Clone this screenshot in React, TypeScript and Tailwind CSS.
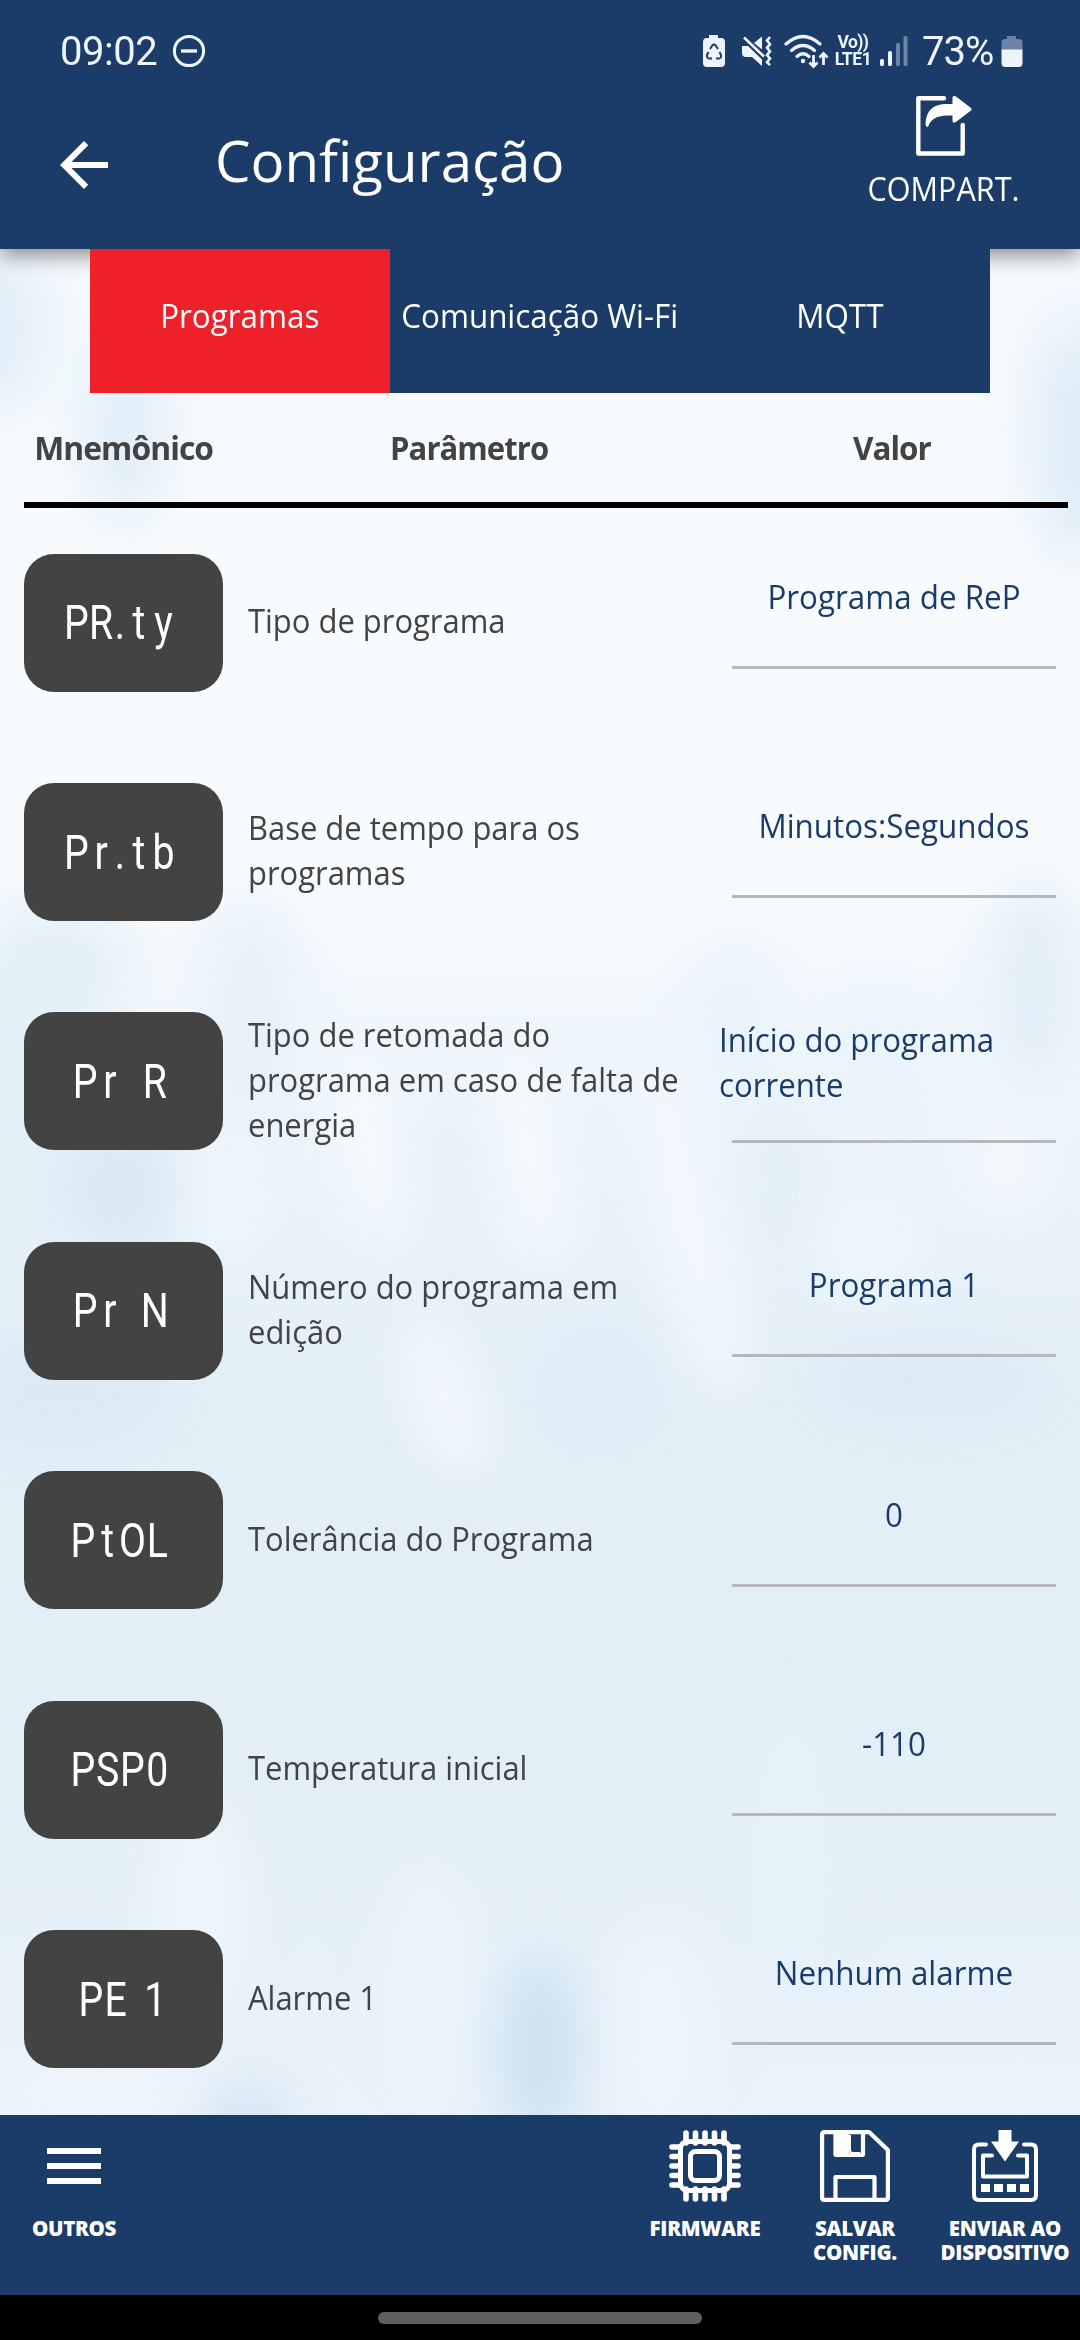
import type { ReactNode } from "react"
import clsx from "clsx"

const tabs = [
  { label: "Programas", active: true },
  { label: "Comunicação Wi-Fi", active: false },
  { label: "MQTT", active: false },
]

const parameters = [
  { code: "PR.ty", name: "Tipo de programa", value: "Programa de ReP" },
  { code: "Pr.tb", name: "Base de tempo para os\nprogramas", value: "Minutos:Segundos" },
  {
    code: "Pr R",
    name: "Tipo de retomada do\nprograma em caso de falta de\nenergia",
    value: "Início do programa\ncorrente",
  },
  { code: "Pr N", name: "Número do programa em\nedição", value: "Programa 1" },
  { code: "PtOL", name: "Tolerância do Programa", value: "0" },
  { code: "PSP0", name: "Temperatura inicial", value: "-110" },
  { code: "PE 1", name: "Alarme 1", value: "Nenhum alarme" },
]

function StatusBar() {
  return (
    <div className="flex h-[102px] items-center pl-[60px] pr-[57px] font-['Roboto',sans-serif] text-[#eef4fd]">
      <span className="w-[112px] pt-[2px] text-[40px] leading-none tracking-[-0.5px]">09:02</span>
      <svg width="34" height="34" viewBox="0 0 34 34" fill="none" stroke="currentColor" strokeWidth="3">
        <circle cx="17" cy="17" r="14.6" />
        <path d="M9 17h16" strokeWidth="3.4" />
      </svg>

      {/* Battery protection */}
      <svg className="ml-auto" width="24" height="34" viewBox="0 0 24 34">
        <path d="M7 1h9v3h3a4 4 0 0 1 4 4v21a4 4 0 0 1-4 4H5a4 4 0 0 1-4-4V8a4 4 0 0 1 4-4h2z" fill="currentColor" />
        <g fill="none" stroke="#1b3b69" strokeWidth="2" strokeLinejoin="round">
          <path d="M8 15l2.300-3.500q1.700-2 3.400 0L16 15" />
          <path d="M17.500 18l1.500 3q.6 3-2 3.500h-3" />
          <path d="M6.500 18L5 21q-.6 3 2 3.500h3" />
        </g>
      </svg>

      {/* Muted */}
      <svg className="ml-[15px]" width="32" height="34" viewBox="0 0 32 34">
        <path d="M1 12h6L21 25.500V32L11 23H5a4 4 0 0 1-4-4z" fill="currentColor" />
        <path d="M13 9l8-6.500v13z" fill="currentColor" />
        <path d="M3 3.500l20 19" stroke="currentColor" strokeWidth="2.600" />
        <path d="M29 3l-3 3.600 3 3.600-3 3.600 3 3.600-3 3.600 3 3.600-3 3.600 3 3" fill="none" stroke="currentColor" strokeWidth="2.600" />
      </svg>

      {/* Wi-Fi */}
      <svg className="ml-[11px]" width="45" height="36" viewBox="0 0 45 36" fill="none" stroke="currentColor">
        <path d="M2 11q17-15 34 0M7.500 17.500q11.500-10 23 0M13 23.500q6-5.500 12 0" strokeWidth="3.200" strokeLinecap="round" />
        <circle cx="19" cy="28" r="2.200" fill="currentColor" stroke="none" />
        <path d="M29.500 22v11M25.500 29.500l4 4 4-4M39.500 32V20.500M35.500 24.500l4-4 4 4" strokeWidth="2.800" />
      </svg>

      <div className="ml-[4px] flex w-[40px] flex-col items-center text-[17.5px] font-bold leading-[17px]">
        <span className="tracking-[-0.6px]">Vo))</span>
        <span className="tracking-[-0.4px]">LTE1</span>
      </div>

      {/* Signal */}
      <svg className="ml-[7px]" width="28" height="32" viewBox="0 0 28 32">
        <rect x="0" y="24" width="4" height="7" rx="1.500" fill="currentColor" />
        <rect x="8" y="16" width="4" height="15" rx="1.500" fill="currentColor" />
        <rect x="16" y="8" width="4" height="23" rx="1.500" fill="#6d83a5" />
        <rect x="23.500" y="1" width="4" height="30" rx="1.500" fill="#6d83a5" />
      </svg>

      <span className="ml-[14px] w-[76px] pt-[2px] text-[40px] leading-none tracking-[-1px]">73%</span>
      <svg className="ml-[3px]" width="22" height="33" viewBox="0 0 22 33">
        <path d="M6 1h9v3h3a3.500 3.500 0 0 1 3.500 3.500V15H.5V7.500A3.500 3.500 0 0 1 4 4h2z" fill="#6d83a5" />
        <path d="M.5 14.500h21V28a4 4 0 0 1-4 4h-13a4 4 0 0 1-4-4z" fill="currentColor" />
      </svg>
    </div>
  )
}

function Header() {
  return (
    <header className="relative z-10 h-[249px] bg-[#1b3b69] text-white shadow-[0_6px_20px_rgba(0,0,0,0.45)]">
      <StatusBar />
      <div className="-mt-[10px] flex h-[147px] items-start pl-[60px] pr-[54px]">
        <svg className="mt-[49px]" width="48" height="48" viewBox="4 4 16 16" fill="currentColor">
          <path d="M20 11H7.830l5.590-5.590L12 4l-8 8 8 8 1.410-1.410L7.830 13H20v-2z" />
        </svg>
        <h1 className="ml-[107px] mt-[28px] origin-left scale-x-[0.99] whitespace-nowrap text-[57px] leading-[80px]">
          Configuração
        </h1>
        <div className="ml-auto flex w-[164px] flex-col items-center pt-[4px]">
          <svg width="56" height="60" viewBox="0 0 56 60">
            <path d="M28 2.300H2.300v55.200h44.400V29" fill="none" stroke="#fff" strokeWidth="4.400" strokeLinecap="round" strokeLinejoin="round" />
            <path d="M38 0q-1.500.2-1.500 2v6H31Q10 8 9.500 28q.2 3 2.500 3Q15 20 31 19.500h5.500V25q.5 2.500 3 1.200L55 14.500q1-1.300 0-2.500L40 .5q-1-.6-2-.5z" fill="#fff" />
          </svg>
          <span className="mt-[11px] scale-x-[0.955] text-[32px] leading-[44px]">COMPART.</span>
        </div>
      </div>
    </header>
  )
}

function Backdrop() {
  return (
    <svg className="absolute inset-0 h-full w-full" viewBox="0 249 1080 1866" preserveAspectRatio="none">
      <defs>
        <linearGradient id="sky" x1="0" y1="0" x2="0" y2="1">
          <stop offset="0" stopColor="#f4f9fd" />
          <stop offset="0.12" stopColor="#f7fbfe" />
          <stop offset="0.34" stopColor="#f7fbfe" />
          <stop offset="0.48" stopColor="#ebf4fb" />
          <stop offset="0.62" stopColor="#e2eff7" />
          <stop offset="0.8" stopColor="#e2eff7" />
          <stop offset="1" stopColor="#e9f3fa" />
        </linearGradient>
        <filter id="soft" filterUnits="userSpaceOnUse" x="-200" y="0" width="1480" height="2400" colorInterpolationFilters="sRGB">
          <feGaussianBlur stdDeviation="26" />
        </filter>
      </defs>
      <rect y="249" width="1080" height="1866" fill="url(#sky)" />
      <g filter="url(#soft)">
        <ellipse cx="0" cy="330" rx="40" ry="80" fill="#dfedf7" />
        <ellipse cx="125" cy="430" rx="38" ry="95" fill="#dfedf7" />
        <ellipse cx="1075" cy="440" rx="40" ry="120" fill="#dcebf6" />
        <ellipse cx="20" cy="1090" rx="60" ry="190" fill="#e3f0f8" />
        <ellipse cx="80" cy="970" rx="45" ry="60" fill="#e2eff7" />
        <ellipse cx="160" cy="950" rx="25" ry="50" fill="#f3f8fc" />
        <ellipse cx="250" cy="1010" rx="42" ry="110" fill="#e5f0f9" />
        <ellipse cx="120" cy="1190" rx="60" ry="70" fill="#dae9f4" />
        <ellipse cx="225" cy="1200" rx="32" ry="50" fill="#f3f8fc" />
        <ellipse cx="370" cy="1150" rx="30" ry="100" fill="#f6fafd" transform="rotate(-8 370 1150)" />
        <ellipse cx="450" cy="1170" rx="28" ry="70" fill="#e4f0f8" />
        <ellipse cx="530" cy="1160" rx="30" ry="110" fill="#f6fafd" transform="rotate(-10 530 1160)" />
        <ellipse cx="610" cy="1180" rx="25" ry="80" fill="#e7f1f9" />
        <ellipse cx="735" cy="1020" rx="35" ry="70" fill="#e8f1fa" />
        <ellipse cx="690" cy="1230" rx="28" ry="180" fill="#f5f9fd" transform="rotate(-14 690 1230)" />
        <ellipse cx="780" cy="1180" rx="40" ry="90" fill="#e4f0f8" />
        <ellipse cx="880" cy="1070" rx="50" ry="70" fill="#e9f3fa" />
        <ellipse cx="1035" cy="980" rx="42" ry="100" fill="#e1eef7" />
        <ellipse cx="1005" cy="1165" rx="40" ry="50" fill="#f4f8fc" />
        <ellipse cx="870" cy="1245" rx="45" ry="45" fill="#f1f7fc" />
        <ellipse cx="445" cy="1400" rx="32" ry="80" fill="#f5f9fd" transform="rotate(-20 445 1400)" />
        <ellipse cx="60" cy="1390" rx="110" ry="60" fill="#dceaf5" />
        <ellipse cx="600" cy="1380" rx="60" ry="60" fill="#dfecf6" />
        <ellipse cx="930" cy="1380" rx="120" ry="40" fill="#dceaf4" />
        <ellipse cx="790" cy="1830" rx="50" ry="140" fill="#e6f2f9" />
        <ellipse cx="200" cy="1900" rx="45" ry="110" fill="#edf5fb" />
        <ellipse cx="430" cy="1980" rx="45" ry="120" fill="#eaf4fa" />
        <ellipse cx="660" cy="2030" rx="50" ry="110" fill="#edf4fb" />
        <ellipse cx="100" cy="2090" rx="120" ry="30" fill="#eef5fb" />
        <ellipse cx="540" cy="2050" rx="40" ry="95" fill="#cbe0f1" />
        <ellipse cx="245" cy="2120" rx="45" ry="28" fill="#cde1f1" />
      </g>
    </svg>
  )
}

const cellWidth: Record<string, string> = {
  ".": "w-[16px]",
  " ": "w-[25px]",
  "1": "w-[18px]",
}

function Mnemonic({ code }: { code: string }) {
  return (
    <div className="flex h-[138px] w-[199px] shrink-0 items-center justify-center rounded-[30px] bg-[#434343] pr-[7px] font-['Roboto',sans-serif] text-[49px] text-white">
      <div className="flex scale-x-[0.8] leading-none">
        {code.split("").map((char, i) => (
          <span key={i} className={clsx("flex justify-center", cellWidth[char] ?? "w-[31px]")}>
            {char}
          </span>
        ))}
      </div>
    </div>
  )
}

function ParameterRow({ code, name, value }: (typeof parameters)[number]) {
  const multiline = value.includes("\n")
  return (
    <div className="flex h-[229.4px] items-center pl-6 text-[33px] leading-[45px]">
      <Mnemonic code={code} />
      <div className="w-[496px] pb-1 pl-[25px] text-[#434343]">
        <p className="origin-left scale-x-[0.938] whitespace-pre">{name}</p>
      </div>
      <div
        className={clsx(
          "flex h-full w-[337px] flex-col text-[#1b3b69]",
          multiline ? "pt-[50px]" : "pt-[66px]"
        )}
      >
        <p
          className={clsx(
            "whitespace-pre",
            multiline ? "origin-left scale-x-[0.945]" : "ml-[13px] scale-x-[0.95] text-center"
          )}
        >
          {value}
        </p>
        <div className={clsx("ml-[13px] h-[3px] bg-[#b5b9bc]", multiline ? "mt-[33px]" : "mt-[47px]")} />
      </div>
    </div>
  )
}

function ActionButton({ className, label, children }: { className: string; label: string; children: ReactNode }) {
  return (
    <button className={clsx("flex flex-col items-center pt-[15px]", className)}>
      <span className="flex h-[72px] items-center">{children}</span>
      <span className="mt-[14px] whitespace-pre text-center text-[20.5px] font-extrabold leading-[24px] tracking-[-0.3px]">
        {label}
      </span>
    </button>
  )
}

function Footer() {
  return (
    <footer className="flex h-[180px] bg-[#1b3b69] text-white">
      <ActionButton className="w-[148px]" label="OUTROS">
        <span className="flex w-[54px] flex-col gap-[9px]">
          <span className="h-[6px] bg-white" />
          <span className="h-[6px] bg-white" />
          <span className="h-[6px] bg-white" />
        </span>
      </ActionButton>

      <ActionButton className="ml-auto w-[150px]" label="FIRMWARE">
        <svg width="72" height="72" viewBox="0 0 72 72" fill="none" stroke="#fff">
          <path
            d="M17 3v10M26.500 3v10M36 3v10M45.500 3v10M55 3v10M17 59v10M26.500 59v10M36 59v10M45.500 59v10M55 59v10M3 17h8M3 26.500h8M3 36h8M3 45.500h8M3 55h8M61 17h8M61 26.500h8M61 36h8M61 45.500h8M61 55h8"
            strokeWidth="5.600"
            strokeLinecap="round"
          />
          <rect x="11.500" y="11.500" width="49" height="49" rx="7" strokeWidth="5" />
          <rect x="21.500" y="21.500" width="29" height="29" rx="5" strokeWidth="5" />
        </svg>
      </ActionButton>

      <ActionButton className="w-[150px]" label={"SALVAR\nCONFIG."}>
        <svg width="70" height="72" viewBox="0 0 70 72" fill="none" stroke="#fff" strokeWidth="4.200" strokeLinejoin="round">
          <path d="M4.500 2.100H49L67.900 20v47.500q0 2.400-2.400 2.400h-61q-2.400 0-2.400-2.400v-63q0-2.400 2.400-2.400z" />
          <path d="M15.500 69V47h39v22M43 3v21.800H15.500V3" />
          <path d="M14 3h15v23H16q-2 0-2-2z" fill="#fff" stroke="none" />
          <path d="M30 5v15q0 3 3 3h7" strokeWidth="2" />
        </svg>
      </ActionButton>

      <ActionButton className="w-[150px]" label={"ENVIAR AO\nDISPOSITIVO"}>
        <svg width="66" height="72" viewBox="0 0 66 72" fill="none" stroke="#fff" strokeWidth="4">
          <path d="M14 14.500H7q-5 0-5 5V65q0 5 5 5h52q5 0 5-5V19.500q0-5-5-5h-7" strokeLinecap="round" />
          <path d="M20 25.500h-9v21h44v-21h-9" strokeLinecap="round" strokeLinejoin="round" />
          <path d="M26.500 0h13v11.500H47L33 31.500 19 11.500h7.500z" fill="#fff" stroke="none" />
          <path d="M9 54h9v8H9zM22 54h9v8h-9zM35 54h9v8h-9zM48 54h9v8h-9z" fill="#fff" stroke="none" />
        </svg>
      </ActionButton>
    </footer>
  )
}

export default function App() {
  return (
    <div className="flex h-[2340px] w-[1080px] flex-col overflow-hidden bg-black font-['Open_Sans',sans-serif]">
      <Header />

      <main className="relative h-[1866px]">
        <Backdrop />
        <div className="relative z-20">
          <nav className="mx-auto grid h-[144px] w-[900px] grid-cols-3 bg-[#1b3b69] text-[33px] text-white">
            {tabs.map((tab) => (
              <button
                key={tab.label}
                className={clsx("flex items-center justify-center pb-[10px]", tab.active && "bg-[#ee202a]")}
              >
                <span className="scale-x-[0.95] whitespace-nowrap">{tab.label}</span>
              </button>
            ))}
          </nav>

          <div className="ml-6 mr-3 flex h-[115px] items-center border-b-[6px] border-black text-[33px] font-bold text-[#434343]">
            <span className="flex w-[199px] justify-center">
              <span className="scale-x-[0.965] tracking-[-1px]">Mnemônico</span>
            </span>
            <span className="flex w-[494px] justify-center">
              <span className="scale-x-[0.94] tracking-[-1px]">Parâmetro</span>
            </span>
            <span className="flex w-[353px] justify-center">
              <span className="scale-x-[0.95] tracking-[-1px]">Valor</span>
            </span>
          </div>

          {parameters.map((parameter) => (
            <ParameterRow key={parameter.code} {...parameter} />
          ))}
        </div>
      </main>

      <Footer />

      {/* Gesture bar */}
      <div className="flex h-[45px] justify-center bg-black pt-[17px]">
        <div className="h-[12px] w-[324px] rounded-full bg-[#5f5f5f]" />
      </div>
    </div>
  )
}
